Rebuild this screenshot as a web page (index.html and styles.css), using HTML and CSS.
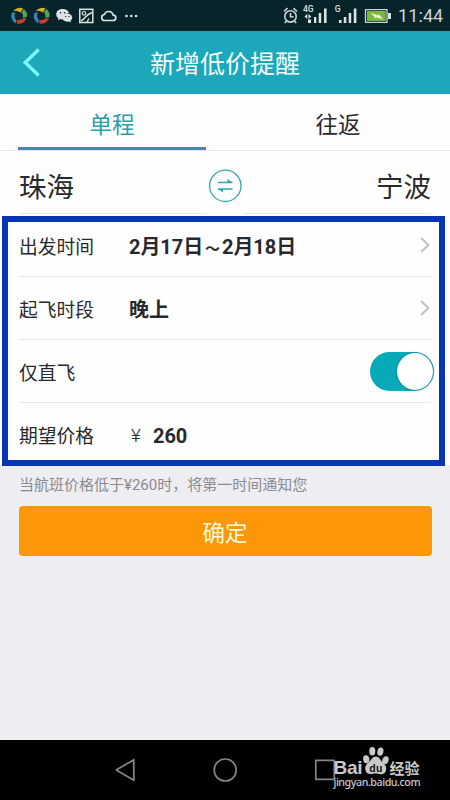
FILE: index.html
```html
<!DOCTYPE html>
<html lang="zh-CN">
<head>
<meta charset="utf-8">
<title>新增低价提醒</title>
<link rel="stylesheet" href="styles.css">
</head>
<body>
<div class="screen">
  <div class="status">
    <svg class="notices" width="150" height="31" viewBox="0 0 150 31">
      <g id="ball">
        <path d="M13 11.500A8 8 0 0 1 23 8.500L20.500 12.500Q16 9.500 13 11.500z" fill="#d9ad2b"/>
        <path d="M23.800 9A8 8 0 0 1 26.800 17L22.800 18Q23.500 13.500 21.300 12.500z" fill="#4da758"/>
        <path d="M26.500 18A8 8 0 0 1 17 23.600L16.500 20Q20.500 20.500 22.300 18.800z" fill="#c63b36"/>
        <path d="M16 23.300A8 8 0 0 1 11.800 12.800L15.500 12.500Q13.500 17 16 19.500z" fill="#3484b5"/>
      </g>
      <use href="#ball" x="22.500"/>
      <g fill="#dce3e4">
        <path d="M62.500 9c-3.700 0-6.300 2.300-6.300 5.200 0 1.600.8 3 2.200 4l-.6 2.100 2.500-1.200c1 .3 2.200.4 3.400.1-.5-3.700 2-6.200 5.300-6.200C68.400 10.500 65.600 9 62.500 9z"/>
        <path d="M67.300 13.400c-3 0-4.900 1.900-4.900 4.200s2.200 4.200 4.900 4.200l1.700-.2 2 1-.5-1.800c1.100-.8 1.700-1.900 1.700-3.200 0-2.300-2.200-4.200-4.900-4.200z"/>
      </g>
      <g fill="#08242b"><circle cx="60.500" cy="12.700" r=".8"/><circle cx="64.600" cy="12.700" r=".8"/><circle cx="65.700" cy="16.600" r=".7"/><circle cx="69" cy="16.600" r=".7"/></g>
      <g fill="none" stroke="#dce3e4" stroke-width="1.500">
        <rect x="79.800" y="9.300" width="13" height="13.200"/>
        <circle cx="84" cy="13.300" r="1.800" stroke-width="1.200"/>
        <path d="M81 20.800Q83.500 19.500 85.500 17T92 12.500M87 22L89 18.500"/>
        <path d="M105 20.500h8a2.700 2.700 0 0 0 .2-5.400 4.600 4.600 0 0 0-8.800-.6 3 3 0 0 0 .6 6z" stroke-width="1.600"/>
      </g>
      <g fill="#dce3e4"><circle cx="126.500" cy="16" r="1.300"/><circle cx="131.300" cy="16" r="1.300"/><circle cx="136.100" cy="16" r="1.300"/></g>
    </svg>
    <svg width="112" height="31" viewBox="280 0 112 31">
      <g fill="none" stroke="#cbd4d5" stroke-width="1.600">
        <circle cx="290.500" cy="16.400" r="5.700"/>
        <path d="M290.500 13v3.800h3M284 11.500l3.500-3.300M293.500 8.200l3.500 3.300M286.500 21l-1.700 2M294.500 21l1.700 2"/>
        <path d="M365.500 9.700H387v12.600h-21.500z" stroke-width="1.300"/>
      </g>
      <text class="net" x="303" y="12">4G</text>
      <text class="net" x="334.800" y="12">G</text>
      <g fill="#dce3e4">
        <path d="M304.500 16.500l2.800-2.500v5zM311.300 16.500l-2.800-2.500v5zM308 19.500h3V23h-3zM314 17h2.300v6H314zM318.700 13h2.500v10h-2.500zM324 8.500h2.600V23H324z"/>
        <path d="M339 20h2.500v3H339zM343.800 17h2.500v6h-2.500zM348.700 13h2.500v10h-2.500zM353.800 8.500h2.600V23h-2.600z"/>
        <path d="M388 13h3v6h-3z"/>
      </g>
      <path d="M367 11h18.700v10H367z" fill="#79bb38"/>
      <path d="M371 13l7.500 2.500-.5-2 5 5.700-7-2 .4 2z" fill="#eff5e8"/>
    </svg>
    <span class="clock">11:44</span>
  </div>

  <header class="header">
    <svg class="back" width="24" height="32" viewBox="0 0 24 32"><path d="M18.700 2.500L5.200 15.500l13.500 13" fill="none" stroke="#7bf8fd" stroke-width="3.500"/></svg>
    <h1 class="title">新增低价提醒</h1>
  </header>

  <nav class="tabs">
    <div class="tab tab-on">单程</div>
    <div class="tab">往返</div>
  </nav>

  <section class="route">
    <span class="city">珠海</span>
    <svg width="36" height="62" viewBox="207 151 36 62">
      <circle cx="225.300" cy="185.800" r="15.700" fill="none" stroke="#34a6a9" stroke-width="1.300"/>
      <path d="M218 182.500h14.500M218 189h14.500" stroke="#34a6a9" stroke-width="1.500"/>
      <path d="M227.500 179l5 3.500h-5zM218 189h5v3.500z" fill="#34a6a9"/>
    </svg>
    <span class="city city-to">宁波</span>
  </section>

  <section class="form">
    <div class="row"><span class="label">出发时间</span><span class="value">2月17日<span class="tilde">～</span>2月18日</span>
      <svg class="arrow" width="12" height="18" viewBox="0 0 12 18"><path d="M2 2l7.500 7L2 16" fill="none" stroke="#bebfc3" stroke-width="1.900"/></svg></div>
    <div class="row"><span class="label">起飞时段</span><span class="value">晚上</span>
      <svg class="arrow" width="12" height="18" viewBox="0 0 12 18"><path d="M2 2l7.500 7L2 16" fill="none" stroke="#bebfc3" stroke-width="1.900"/></svg></div>
    <div class="row"><span class="label">仅直飞</span><span class="switch"><span class="knob"></span></span></div>
    <div class="row row-last"><span class="label">期望价格</span><span class="yen">¥</span><span class="value price">260</span></div>
    <div class="frame"></div>
  </section>

  <p class="hint">当航班价格低于¥260时，将第一时间通知您</p>
  <button class="submit">确定</button>

  <footer class="navbar">
    <svg width="450" height="60" viewBox="0 740 450 60">
      <g fill="none" stroke="#858585" stroke-width="1.700" stroke-linejoin="round">
        <path d="M116.200 770l17.600-10.300v20.600z"/>
        <circle cx="225.200" cy="770" r="11"/>
        <path d="M315.800 760.300h18.500v19h-18.500z"/>
      </g>
      <g fill="#c9c9c9">
        <text class="logo" x="333.500" y="774" textLength="29">Bai</text>
        <ellipse cx="366.200" cy="759.300" rx="3.100" ry="4" transform="rotate(-12 366 759)"/>
        <ellipse cx="372.300" cy="751.300" rx="3" ry="4.200"/>
        <ellipse cx="380.300" cy="751.600" rx="3" ry="4.200" transform="rotate(12 380 752)"/>
        <ellipse cx="385.500" cy="760" rx="3.100" ry="4" transform="rotate(18 385 760)"/>
        <path d="M376 756.500c-3.500 0-4.800 3.700-7 5.600-2.500 2-4.500 4.200-3.600 8 .8 3.900 4 4.300 6.600 3.800 2.400-.5 4.600-.5 7 0 3 .7 6.300.2 7-3.600.9-4-1.600-6.200-3.600-8.200-2.100-1.900-3-5.600-6.400-5.600z"/>
        <text class="logo-cn" x="389.500" y="773.500" textLength="30">经验</text>
        <text class="site" x="333.500" y="786" textLength="87">jingyan.baidu.com</text>
      </g>
      <text class="du" x="369.300" y="771.500" textLength="13">du</text>
    </svg>
  </footer>
</div>
</body>
</html>
```
FILE: styles.css
```css
body {
  margin: 0;
  font-family: Roboto, "Noto Sans CJK SC", sans-serif;
  color: #29292d;
}

.screen {
  width: 450px;
  height: 800px;
  display: flex;
  flex-direction: column;
  background: #eeedf2;
  overflow: hidden;
}

.status {
  height: 31px;
  flex: none;
  display: flex;
  align-items: center;
  background: #08242b;
}

.notices { margin-right: 130px; }
.status svg { flex: none; }
.net { font: 500 8.5px Roboto, sans-serif; fill: #dce3e4; }

.clock {
  margin-left: 6px;
  font-size: 18px;
  line-height: 31px;
  letter-spacing: 0.1px;
  color: #cbd5d6;
}

.header {
  height: 63px;
  flex: none;
  display: grid;
  grid-template-columns: 60px 1fr 60px;
  align-items: center;
  background: #1ca7bb;
}

.back { margin-left: 20px; }

.title {
  margin: 0;
  padding-top: 4px;
  text-align: center;
  font-size: 25px;
  line-height: 36px;
  font-weight: 400;
  color: #f2ffff;
}

.tabs {
  height: 56px;
  flex: none;
  display: grid;
  grid-template-columns: 188px 188px;
  justify-content: space-between;
  padding: 0 18px;
  background: #fefefe;
  border-bottom: 1px solid #e8e8ea;
}

.tab {
  box-sizing: border-box;
  height: 56px;
  border-bottom: 3px solid transparent;
  text-align: center;
  font-size: 22.5px;
  line-height: 62px;
}

.tab-on { color: #279fae; border-bottom-color: #2998a4; }

.route {
  height: 63px;
  flex: none;
  display: flex;
  padding: 0 19px;
  background: #fefefe;
}

.city {
  box-sizing: border-box;
  flex: 1;
  height: 63px;
  border-bottom: 1px solid #e8e8ea;
  font-size: 27.5px;
  line-height: 74px;
}

.city-to { text-align: right; }

.form {
  position: relative;
  flex: none;
  padding: 0 19px;
  background: #fefefe;
}

.row {
  box-sizing: border-box;
  height: 63px;
  display: flex;
  align-items: center;
  border-bottom: 1px solid #e8e8ea;
}

.row-last { height: 62px; border-bottom: 0; }
.label { width: 110px; font-size: 18.75px; }
.value { font-size: 20px; font-weight: 700; white-space: nowrap; letter-spacing: -0.05px; }
.tilde { display: inline-block; width: 18.8px; text-align: center; font-size: 15px; }
.price { padding-top: 3px; }
.yen { width: 24px; padding: 2px 0 0 2px; box-sizing: border-box; font-size: 19px; font-weight: 300; }
.arrow { margin-left: auto; }

.switch {
  box-sizing: border-box;
  width: 64px;
  height: 39px;
  margin-left: auto;
  margin-right: -3px;
  padding: 1px;
  display: flex;
  justify-content: flex-end;
  border-radius: 20px;
  background: #08a9b9;
}

.knob {
  width: 36px;
  height: 37px;
  border-radius: 50%;
  background: #fff;
  box-shadow: 0 0 2px #15616c;
}

.frame {
  position: absolute;
  box-sizing: border-box;
  left: 2px;
  top: 2px;
  width: 442.5px;
  height: 250px;
  border: 6px solid #0735b4;
}

.hint {
  margin: 0;
  padding: 7px 19px 0;
  height: 34px;
  font-size: 15px;
  line-height: 27px;
  color: #8b8b90;
}

.submit {
  flex: none;
  height: 50px;
  margin: 0 18.5px;
  padding: 0;
  border: 0;
  border-radius: 4px;
  background: #fd9708;
  color: #fff8db;
  font: 400 22.5px Roboto, "Noto Sans CJK SC", sans-serif;
}

.navbar {
  height: 60px;
  flex: none;
  margin-top: auto;
  background: #000;
}

.logo { font: 700 19px "Liberation Sans", sans-serif; }
.logo-cn { font: 700 15px "Noto Sans CJK SC", sans-serif; }
.site { font: 500 10.7px "Noto Sans", sans-serif; }
.du { font: 700 10.5px "Liberation Sans", sans-serif; fill: #111; }
```
